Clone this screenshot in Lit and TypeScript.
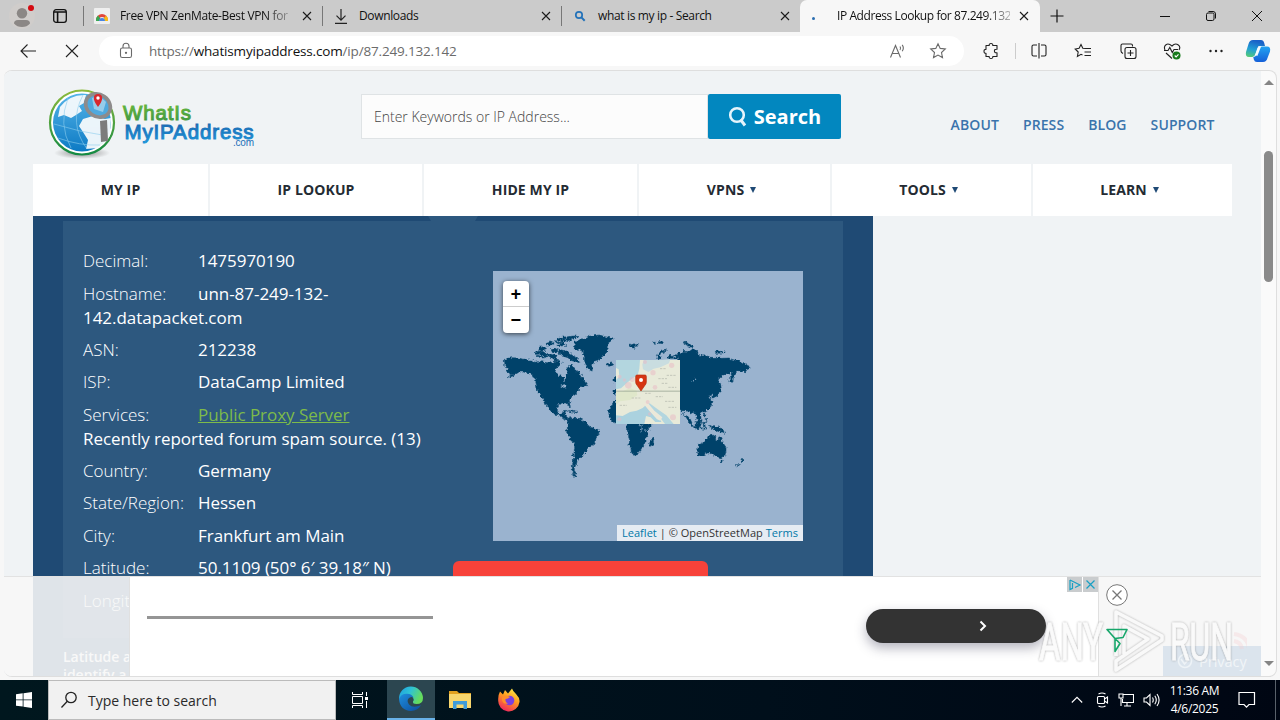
import { LitElement, html, css, svg } from "lit";
import { customElement, property } from "lit/decorators.js";

const closeIcon = html`
  <svg width="10" height="10" viewBox="0 0 10 10" fill="none" stroke="#1b1b1b" stroke-width="1.1">
    <path d="M1 1l8 8M9 1L1 9" />
  </svg>
`;

@customElement("browser-tabs")
export class BrowserTabs extends LitElement {
  render() {
    return html`
      <div class="profile">
        <svg width="30" height="28" viewBox="0 0 30 28">
          <circle cx="15" cy="14" r="13" fill="#d0cdcb" />
          <circle cx="15" cy="11.300" r="5.200" fill="#8b8785" />
          <path d="M7 21.500q0-3.500 4-3.500h8q4 0 4 3.500q-3 3.500-8 3.500t-8-3.500z" fill="#8b8785" />
          <circle cx="24" cy="6" r="3" fill="#d40b12" />
        </svg>
      </div>
      <div class="actions">
        <svg width="16" height="16" viewBox="0 0 16 16" fill="none" stroke="#111" stroke-width="1.3">
          <rect x="1.7" y="1.7" width="12.6" height="12.6" rx="2.4" />
          <path d="M2 4h12M5.600 4v10" stroke-width="1.6" />
        </svg>
      </div>
      <div class="tab">
        <span class="icon">
          <svg width="16" height="16" viewBox="0 0 16 16">
            <rect width="16" height="16" rx="1" fill="#efefef" />
            <path d="M2 12a6 6 0 0 1 12 0h-3a3 3 0 0 0-6 0z" fill="#e2463b" />
            <path d="M2 13a6 6 0 0 1 2-5.400l2.400 3.200L5 13z" fill="#38a853" />
            <path d="M14 13a6 6 0 0 0-2-5.400l-2.400 3.200L11 13z" fill="#f8bb15" />
            <path d="M5 13a3 3 0 0 1 6 0z" fill="#4a86e0" />
          </svg>
        </span>
        <span class="title fade">Free VPN ZenMate-Best VPN for</span>
        <span class="close">${closeIcon}</span>
      </div>
      <div class="tab">
        <span class="icon">
          <svg width="16" height="18" viewBox="0 0 16 18" fill="none" stroke="#222" stroke-width="1.2">
            <path d="M8 2v11M3.500 8.700L8 13.200l4.500-4.500M2 16.400h12" />
          </svg>
        </span>
        <span class="title">Downloads</span>
        <span class="close">${closeIcon}</span>
      </div>
      <div class="tab">
        <span class="icon">
          <svg width="14" height="14" viewBox="0 0 14 14" fill="none" stroke="#2372b9">
            <circle cx="6" cy="6" r="3.200" stroke-width="1.700" />
            <path d="M8.400 8.400l3.300 3.300" stroke-width="2" />
          </svg>
        </span>
        <span class="title">what is my ip - Search</span>
        <span class="close">${closeIcon}</span>
      </div>
      <div class="tab active">
        <span class="icon"><i class="dot"></i></span>
        <span class="title fade">IP Address Lookup for 87.249.132</span>
        <span class="close">${closeIcon}</span>
      </div>
      <div class="plus">
        <svg width="14" height="14" viewBox="0 0 14 14" stroke="#111" stroke-width="1.200">
          <path d="M7 .5v13M.5 7h13" />
        </svg>
      </div>
      <div class="controls">
        <svg width="12" height="12" viewBox="0 0 12 12" stroke="#111"><path d="M1 6.500h10" /></svg>
        <svg width="12" height="12" viewBox="0 0 12 12" fill="none" stroke="#111">
          <rect x="1.500" y="3" width="7.500" height="7.500" rx="1.500" />
          <path d="M3.500 1.500h4.500q2.500 0 2.500 2.500v4.500" />
        </svg>
        <svg width="12" height="12" viewBox="0 0 12 12" stroke="#111">
          <path d="M1 1l10 10M11 1L1 11" />
        </svg>
      </div>
    `;
  }

  static styles = css`
    :host {
      display: flex;
      height: 32px;
      background: #cbcbcb;
      font: 12px "Open Sans", sans-serif;
      color: #111;
    }
    svg {
      display: block;
    }
    .profile {
      width: 46px;
      padding: 2px 0 0 7px;
      box-sizing: border-box;
    }
    .actions {
      width: 37px;
      padding: 8px 0 0 6px;
      box-sizing: border-box;
    }
    .tab {
      display: flex;
      align-items: center;
      width: 239px;
      box-sizing: border-box;
      background: linear-gradient(#777, #777) left 50% / 1px 20px no-repeat;
    }
    .icon {
      display: flex;
      flex: none;
      justify-content: center;
      width: 16px;
      margin: 0 10px 0 11px;
    }
    .title {
      flex: 1;
      white-space: nowrap;
      line-height: 20px;
      letter-spacing: -0.35px;
    }
    .fade {
      mask-image: linear-gradient(90deg, #000 86%, rgba(0, 0, 0, 0.3) 100%);
    }
    .close {
      margin: 0 10px 0 14px;
    }
    .active {
      background: #f7f7f7;
      border-radius: 7px 7px 0 0;
      width: 240px;
    }
    .active .icon {
      margin: 0 16px 0 5px;
    }
    .active .title {
      min-width: 0;
      letter-spacing: -0.42px;
    }
    .active .close {
      margin: 0 11px 0 9px;
    }
    .dot {
      width: 3px;
      height: 3px;
      border-radius: 50%;
      background: #2a6db0;
      margin-top: 4px;
    }
    .plus {
      padding: 9px 0 0 10px;
      width: 101px;
    }
    .controls {
      display: flex;
      align-items: center;
      gap: 34px;
      padding-left: 8px;
    }
  `;
}

@customElement("browser-toolbar")
export class BrowserToolbar extends LitElement {
  render() {
    return html`
      <svg class="back" width="18" height="16" viewBox="0 0 18 16"><path d="M8.500 1.500L2 8l6.500 6.500M2 8h15" /></svg>
      <svg class="stop" width="14" height="14" viewBox="0 0 14 14"><path d="M1 1l12 12M13 1L1 13" /></svg>
      <div class="address">
        <svg width="14" height="18" viewBox="0 0 14 18" class="grey">
          <rect x="1.500" y="6" width="11" height="9.500" rx="1.800" />
          <path d="M4 6V4.200a3 3 0 0 1 6 0V6" />
          <circle cx="7" cy="10.800" r=".6" fill="#666" />
        </svg>
        <span class="url">https://<b>whatismyipaddress.com</b>/ip/87.249.132.142</span>
        <svg width="18" height="16" viewBox="0 0 18 16" class="grey">
          <path d="M1.500 14.500L6.500 2.500l5 12M3.200 10.500h6.600M11 3.500q1.300 1.800 0 3.500M13.200 1.800q2.300 3 0 6.500" />
        </svg>
        <svg width="18" height="18" viewBox="0 0 18 18" class="grey">
          <path d="M9 1.700l2.200 4.700 5.100.6-3.800 3.500 1 5.100L9 13.100l-4.500 2.500 1-5.100L1.700 7l5.100-.6z" />
        </svg>
      </div>
      <div class="tools">
        <svg width="18" height="18" viewBox="0 0 18 18">
          <path
            d="M4 3.500h3.200q-.2-2 1.800-2t1.800 2H15v3.700q-2.600-.2-2.600 1.800t2.600 1.800v3.700h-4.200q.2 2-1.800 2t-1.800-2H4v-3.200q-2 .2-2-2t2-1.800z"
            stroke-linejoin="round"
          />
        </svg>
        <i class="divider"></i>
        <svg width="18" height="18" viewBox="0 0 18 18">
          <path d="M7 3H3.500Q2 3 2 4.500v8Q2 14 3.500 14H7M11 3h3.500Q16 3 16 4.500v8q0 1.500-1.500 1.500H11M9 1v15.500" />
        </svg>
        <svg width="18" height="18" viewBox="0 0 18 18">
          <path d="M11 6.500L8.800 6.200 7 2.500 5.100 6.200 1.200 7l3 3-.8 4.500L7 12.300l1.500.8M11 6.500h6M10.500 10H17M10.500 13.500H17" />
        </svg>
        <svg width="18" height="18" viewBox="0 0 18 18">
          <path d="M13.500 4.500V3.500Q13.500 2 12 2H3.500Q2 2 2 3.500V9q0 1.500 2 2.500" />
          <rect x="6" y="5.500" width="11" height="11" rx="2" />
          <path d="M11.500 8v6M8.500 11h6" />
        </svg>
        <svg width="18" height="18" viewBox="0 0 18 18">
          <path d="M2 8Q.5 4.500 3 2.700T9 4q3-3.200 6-1.300T16 8M1 8.500h4l1.800-3 2.500 5 1.700-3h4M3 11l6 5.500" />
          <circle cx="13.500" cy="13.500" r="4" fill="#177a1b" stroke="none" />
          <path d="M11.700 13.500l1.400 1.400 2.400-2.600" stroke="#fff" />
        </svg>
        <svg width="18" height="18" viewBox="0 0 18 18">
          <g fill="#222" stroke="none">
            <circle cx="3.500" cy="9" r="1.200" /><circle cx="9" cy="9" r="1.200" /><circle cx="14.500" cy="9" r="1.200" />
          </g>
        </svg>
      </div>
      <svg class="copilot" width="26" height="24" viewBox="0 0 26 24">
        <defs>
          <linearGradient id="ca" x1=".3" y1="0" x2="0" y2="1">
            <stop offset="0" stop-color="#1a62c8" /><stop offset=".5" stop-color="#22a0d5" /><stop offset="1" stop-color="#5bd06c" />
          </linearGradient>
          <linearGradient id="cb" x1="0" y1="0" x2="0" y2="1">
            <stop offset="0" stop-color="#22a4f2" /><stop offset="1" stop-color="#1560d8" />
          </linearGradient>
        </defs>
        <path d="M8 1h8q2.500 0 3.200 3l.8 3h-5q-2 0-2.600 2l-2 6q-1 3-3 3H4q-4 0-3-5L3.500 5Q4.500 1 8 1z" fill="url(#ca)" stroke="none" />
        <path d="M18 23h-6q-2.500 0-3.200-2.500L8.300 18q2.500 0 3.400-3l2.300-5.500q.8-2 3-2H22q4 0 3 5L22.500 19q-1 4-4.500 4z" fill="url(#cb)" stroke="none" />
        <path d="M14.800 7.500l-3.600 9" stroke="#f4fbff" stroke-width="2.400" />
      </svg>
    `;
  }

  static styles = css`
    :host {
      display: flex;
      align-items: center;
      height: 38px;
      background: #f7f7f7;
      font: 13.5px "Open Sans", sans-serif;
      color: #6b6b6b;
    }
    svg {
      fill: none;
      stroke: #222;
      stroke-width: 1.1;
      flex: none;
    }
    .grey {
      stroke: #6a6a6a;
    }
    .back {
      margin-left: 19px;
    }
    .stop {
      margin-left: 28px;
    }
    .address {
      display: flex;
      align-items: center;
      box-sizing: border-box;
      width: 865px;
      height: 30px;
      margin-left: 20px;
      padding: 0 17px 0 20px;
      border-radius: 15px;
      background: #fff;
      gap: 22px;
    }
    .url {
      flex: 1;
      margin-left: -6px;
      letter-spacing: -0.17px;
    }
    b {
      font-weight: 400;
      color: #111;
    }
    .tools {
      display: flex;
      align-items: center;
      margin-left: 18px;
      gap: 26.4px;
    }
    .divider {
      width: 1px;
      height: 16px;
      background: #ccc;
      margin: 0 -13px 0 -11px;
    }
    .copilot {
      margin-left: 20px;
    }
  `;
}

@customElement("site-header")
export class SiteHeader extends LitElement {
  render() {
    return html`
      <header>
        <svg class="logo" width="210" height="74" viewBox="0 0 210 74">
          <defs>
            <linearGradient id="ring" x1="0" y1="0" x2="0" y2="1">
              <stop offset="0" stop-color="#8cba3d" /><stop offset="1" stop-color="#148a43" />
            </linearGradient>
            <linearGradient id="sea" x1="0" y1="0" x2="0" y2="1">
              <stop offset="0" stop-color="#54b4e8" /><stop offset="1" stop-color="#0d7ac4" />
            </linearGradient>
            <linearGradient id="green" x1="0" y1="0" x2="0" y2="1">
              <stop offset="0" stop-color="#6dbb3c" /><stop offset="1" stop-color="#3b9440" />
            </linearGradient>
            <linearGradient id="blue" x1="0" y1="0" x2="0" y2="1">
              <stop offset="0" stop-color="#1b62ab" /><stop offset="1" stop-color="#1c94d8" />
            </linearGradient>
            <radialGradient id="shade"><stop stop-color="#8b8b8b" /><stop offset="1" stop-color="#8b8b8b00" /></radialGradient>
          </defs>
          <ellipse cx="34" cy="65" rx="28" ry="6" fill="url(#shade)" />
          <circle cx="34" cy="34.500" r="32" fill="#fff" stroke="url(#ring)" stroke-width="2.200" />
          <circle cx="34" cy="34.500" r="29" fill="url(#sea)" />
          <path d="M12 19Q22 6 38 7l-2 8-5 3 3 5-6 4-5 3-7-3-6 2z" fill="#f5fafc" opacity=".95" />
          <path d="M35 31l10-3 12 3 6-1-1 18-12 12-12 1 2-9-5-8-4-6z" fill="#f5fafc" opacity=".95" />
          <path d="M6 36q25 8 54 12M10 50q22 8 42 7M20 10Q10 36 23 60M35 7Q20 35 39 61" fill="none" stroke="#8ccced" stroke-width=".6" />
          <path d="M52 33l7-1 1 21-7 1z" fill="#7c7c7c" />
          <ellipse cx="50" cy="17.500" rx="13" ry="11" fill="#4fa9de" stroke="#8e8b8b" stroke-width="3.600" transform="rotate(35 50 17.500)" />
          <path d="M44 10q7-4 14 4l-3 10-9-3z" fill="#eef8fb" opacity=".45" />
          <path d="M50 19q-4.500-6-4.200-9.500T50 6t4.200 3.500T50 19z" fill="#d8282d" />
          <circle cx="50" cy="10" r="1.700" fill="#fff" />
          <g font-family="Liberation Sans, sans-serif">
            <text x="75" y="32" font-size="20.500" textLength="68" fill="url(#green)" stroke="url(#green)" stroke-width="1">WhatIs</text>
            <text x="76.500" y="51" font-size="20.500" textLength="129" fill="url(#blue)" stroke="url(#blue)" stroke-width="1">MyIPAddress</text>
            <text x="185" y="57.500" font-size="10" textLength="21" fill="#1d6fb8">.com</text>
          </g>
        </svg>
        <form class="search">
          <span class="field">Enter Keywords or IP Address...</span>
          <span class="button">
            <svg width="20" height="22" viewBox="0 0 20 22" fill="none" stroke="#e6f4fb">
              <circle cx="9" cy="9" r="6.800" stroke-width="2.600" />
              <path d="M12.500 13.500l4.500 6" stroke-width="3" />
            </svg>
            Search
          </span>
        </form>
        <div class="links"><a>ABOUT</a><a>PRESS</a><a>BLOG</a><a>SUPPORT</a></div>
      </header>
      <nav>
        <a>MY IP</a>
        <a>IP LOOKUP</a>
        <a>HIDE MY IP</a>
        <a>VPNS<i></i></a>
        <a>TOOLS<i></i></a>
        <a>LEARN<i></i></a>
      </nav>
    `;
  }

  static styles = css`
    :host {
      display: block;
      font-family: "Open Sans", sans-serif;
    }
    header {
      display: flex;
      height: 93px;
      box-sizing: border-box;
      padding: 17px 47px 0 44px;
    }
    .search {
      display: flex;
      height: 45px;
      margin: 6px 0 0 103px;
    }
    .field {
      box-sizing: border-box;
      width: 347px;
      padding-left: 12px;
      border: 1px solid #dfe3e5;
      background: #fcfcfc;
      color: #444;
      font-size: 14px;
      font-weight: 300;
      line-height: 43px;
    }
    .button {
      display: flex;
      align-items: center;
      justify-content: center;
      gap: 6px;
      width: 133px;
      border-radius: 2px;
      background: #0287bf;
      color: #fff;
      font-size: 20px;
      font-weight: 700;
    }
    .links {
      display: flex;
      gap: 24px;
      margin: 27px -0.5px 0 auto;
      color: #3a73ac;
      font-size: 14px;
      font-weight: 600;
      line-height: 20px;
      letter-spacing: 0.1px;
    }
    nav {
      display: grid;
      grid-template-columns: 175px 212px 213px 191px 199px 199px;
      gap: 2px;
      height: 52px;
      margin-left: 29px;
    }
    nav a {
      display: flex;
      align-items: center;
      justify-content: center;
      padding-bottom: 2px;
      background: #fff;
      color: #242b33;
      font-size: 14px;
      font-weight: 700;
      letter-spacing: 0.12px;
    }
    nav i {
      margin: 2px 6px 0;
      border: 3px solid transparent;
      border-top: 6px solid #1f4a75;
      border-bottom: 0;
    }
  `;
}

@customElement("world-map")
export class WorldMap extends LitElement {
  land = svg`
    <path d="M58 292l22-5 20 1 12 3 28 4 10 6 14-3 14 3 17 2 20-5 17 2-10 12-10 8-2 8 4 6 14 5 8 5 2 14 5-3-1-14 6-10-2-12 10-10 12 8 6 10 8 2 8 14 12 20 6 8-8-1-12 4-7 6 3 2-12 12-12 8-2 8-5 8 3 16-4-1-6-10-14 0-10 4-5 10 0 12 6 8 8-2 4-9 7-1-3 13 8 4 1 10 8 4-5 1-13-6-12-11-16-3-14-8-6-14-8-8-3-10 4 14-3-2-8-22-14-18-4-20-2-15-8-14-14-8-14-2-14 0-18 12-17 5 15-12-10-1-9-8 5-7-8-4z"/>
    <path d="M270 238l28-9 12-6 35-4 14 5 26 4-12 10-3 12-1 14-8 6 2 6-12 8-8 8-12 4-8 10-2 21-8-4-7-8-8-20 2-10-6-6 2-8-14-9-14-2z"/>
    <path d="M212 234l18-8 38-4 14 2-18 8-20 4-12 6-22 0zM184 244l14-4 8 5-10 4-12 0zM162 256l16-2 8 8-12 5-12-3zM148 270l22-3 10 5 12 9-18 7-14-2-8-8zM195 264l14-6 10 6-7 7zM222 262l22 6 18 12 14 8 9 16-14-5-14-4-8-8-18-5-12-8zM190 281l12-5 16 10-14 6zM214 248l18-4 10 6-20 4zM206 289l16 5-14 5z"/>
    <path d="M366 306l14-3 6 5-8 4-10 1zM286 364l12 1 1 7-12-3zM246 446l14 1 10 4-10-1zM270 450l8 1-5 2zM387 350l6-4v14l-6 1zM387 384l6-2v18l-6-4z"/>
    <path d="M248 473l10-6 8 2 14 0 12 6 12 8 7 12 14 3 16 9 1 7-8 10-3 14-6 10-14 7-6 12-10 8-2 9-12 5-5 9-2 12-6 6 0 10 8 10-10-2-4-8 0-16 3-14 1-18 3-18 0-16-12-9-6-14-8-13 4-11z"/>
    <path d="M264 634l9 6-4 5-6-5zM393 410l-10 14-7 15-5 9 2 18 8 11 12 6zM427 484h76l-12 15-4 11 1 14-8 9 0 13-9 10-2 8-12 13-11 3-6-8-3-13-5-10 2-14-3-12 0-16-7-8zM508 527l-3 12-6 15-5-4 1-14z"/>
    <path d="M578 274l20-6 14 1 10-7 12 2 2 10 14 8 14-1 12 5 20 0 14 3 22-1 12 5 18 4 14 8 14 6 6 4-8 4-6 10-12-1-10-3-8 8-7 10-1 12-7 8-5-10 8-12 3-12-9 4-15 2-10 10-12 7 10 14 2 16-6 14-10 7-6-1-3-5-14 5 3 10 8 7-4 15-8 8-12 9-6 0-5 5 2 12-6 11-5-3-3-12-5-13-8 2-6 3-8-10H578z"/>
    <path d="M640 547l15-6 9-12 8-5 4-2 8-3 9 5-2 8 7 6 6-17 5 10 4 10 10 15 0 13-4 13-10 8-10-2-7-10-8 2-10-7-10 0-12 7-12 1-2-10z"/>
    <path d="M706 597l6-1-3 7zM753 613l9-9 4 3-8 6zM768 595l2-6 6 3-5 8zM516 288l4-14 10-7 18-3-16 7-7 10 0 10zM548 286l8-7 6 7 10-5 12 4v4h-36zM596 242l8-2 8 7 10 3 4 7-10-2-10-5zM430 246l10 2 16-4 5 5-10 1-4 5 4 8-6-5-10-3zM691 268l10-1 16 3-1 3-25 1zM503 241l8 0-2 3zM520 239l15 0-2 6-12-2z"/>
    <path d="M602 456l14 16 8 18-3 2-10-14-10-16zM622 492l20 5 22 2-4 3-32-4zM630 484l10-4 6-9 5 3-3 14-7 11-10-6zM654 482l8-2-3 4 2 10-5-1zM654 452l5 5 1 8-3-2zM660 470l7 0 1 7-5 1zM674 490l10 4 15 0 15 9 5 11-10-4-14-2-8-6-10-4zM700 352l3 12-2 16 1 10-4 10-12 7-10 1-2 6 3-10 12-4 8-8zM594 452l3 8-4 1zM658 424l4-9 2 4-3 8zM644 442l4 1-2 4z"/>`;

  render() {
    return html`
      <svg width="310" height="270" viewBox="24 27 930 810">
        <filter id="coast">
          <feTurbulence type="fractalNoise" baseFrequency="0.12" numOctaves="2" seed="4" />
          <feDisplacementMap in="SourceGraphic" scale="14" xChannelSelector="R" yChannelSelector="G" />
        </filter>
        <rect x="24" y="27" width="930" height="810" fill="#9ab3cf" />
        <g filter="url(#coast)">
          <g fill="#00436b" stroke="#00436b" stroke-width="1.500">${this.land}</g>
          <path d="M214 322l12-9 12 7 8 18-6 12-6-6-14-4zM226 372l12-5 10 7-12 3zM618 362l14-14-4 11z" fill="#9ab3cf" />
          <g fill="none" stroke="#9ab3cf" stroke-width="2.500">
            <path d="M150 278l22 3 16 10M170 260l14 14 18 2M206 230l14 10 24-10M224 274l14 10-2 9M464 488l8 10-5 16M484 500l-4 10M272 300l-9 6" />
          </g>
        </g>
        <g>
          <rect x="393" y="294" width="192" height="192" fill="#e8ead9" />
          <path d="M393 294h72l-2 26-5 20-15 9-15 12-20 18-15 3v-28l10-10-2-22-8-4z" fill="#b3d6df" />
          <path d="M476 294h50l30-2-4 12-26 12-20 4-16 10-16-8-2-14z" fill="#c9dde0" />
          <path d="M393 486v-26l20 2 22-12 20-4 18-8 14-12 14 6 18 20 10 28h-18l-14-14-14-4-5 24z" fill="#abd2df" />
          <path d="M478 430l10 0 20 22 20 18 12 16h26l-22-26-26-18-24-18z" fill="#b3d6df" />
          <path d="M474 424l12-4 22 26 24 20-6 10-10-4-22-24z" fill="#ece8d9" />
          <path d="M393 390l20-2 22-10 20 8 2 14-22 14-30 4-12 10z" fill="#dfe7ca" />
          <g fill="#e9b9c4" opacity=".5">
            <circle cx="430" cy="370" r="10" /><circle cx="442" cy="352" r="8" /><circle cx="418" cy="354" r="5" />
            <circle cx="504" cy="332" r="8" /><circle cx="510" cy="376" r="7" /><circle cx="560" cy="310" r="8" />
            <circle cx="404" cy="344" r="6" /><circle cx="488" cy="420" r="6" /><circle cx="480" cy="300" r="6" />
            <circle cx="494" cy="456" r="5" /><circle cx="564" cy="466" r="9" /><circle cx="403" cy="472" r="6" />
          </g>
          <path
            d="M520 350h26M530 364h20M545 340h28M512 404h22M540 418h30M440 408h26M525 320h20M550 436h24M404 430h22M550 376h24M480 394h18"
            stroke="#c3c6ba"
            stroke-width="3"
            stroke-dasharray="7 3"
          />
          <path d="M393 387.500h192" stroke="#9aa694" stroke-width="2.500" />
        </g>
        <path d="M456 339h24q4 0 4 4v18q0 5-5 10l-11 16-11-16q-5-5-5-10v-18q0-4 4-4z" fill="#d63511" stroke="#b52f12" stroke-width="2" />
        <circle cx="468" cy="354" r="6" fill="#fff" />
      </svg>
      <div class="zoom"><span>+</span><span>−</span></div>
      <div class="credit"><a>Leaflet</a> | © OpenStreetMap <a>Terms</a></div>
    `;
  }

  static styles = css`
    :host {
      display: block;
      position: relative;
      width: 310px;
      height: 270px;
    }
    .zoom {
      position: absolute;
      left: 10px;
      top: 10px;
      width: 26px;
      border-radius: 4px;
      background: #fff;
      box-shadow: 0 1px 5px rgba(0, 0, 0, 0.65);
      color: #000;
      font: bold 18px/28px "Liberation Mono", monospace;
      text-align: center;
    }
    .zoom span {
      display: block;
      height: 26px;
    }
    .zoom span:first-child {
      height: 25px;
      border-bottom: 1px solid #ccc;
    }
    .credit {
      position: absolute;
      right: 0;
      bottom: 0;
      padding: 0 5px;
      background: rgba(255, 255, 255, 0.75);
      color: #333;
      font-size: 11px;
      line-height: 16px;
      letter-spacing: 0.03px;
      white-space: nowrap;
    }
    .credit a {
      color: #0078a8;
    }
  `;
}

@customElement("ip-details")
export class IpDetails extends LitElement {
  @property({ type: Array })
  rows = [
    ["Decimal:", "1475970190"],
    ["Hostname:", "unn-87-249-132-142.datapacket.com"],
    ["ASN:", "212238"],
    ["ISP:", "DataCamp Limited"],
    ["Services:", html`<a>Public Proxy Server</a><br />Recently reported forum spam source. (13)`],
    ["Country:", "Germany"],
    ["State/Region:", "Hessen"],
    ["City:", "Frankfurt am Main"],
    ["Latitude:", "50.1109 (50° 6′ 39.18″ N)"],
    ["Longitude:", ""],
  ];

  render() {
    return html`
      <div class="notch"></div>
      <section class="inner">
        <div class="list">
          ${this.rows.map(([label, value]) => html`<p><span>${label}</span>${value}</p>`)}
        </div>
        <div class="side">
          <world-map></world-map>
          <div class="update"></div>
        </div>
      </section>
      <div class="note">Latitude and<br />identify a</div>
    `;
  }

  static styles = css`
    :host {
      display: block;
      width: 840px;
      height: 460px;
      box-sizing: border-box;
      padding: 0 30px;
      overflow: hidden;
      background: #1f4a74;
      color: #fff;
      font-family: "Open Sans", sans-serif;
    }
    .notch {
      width: 50px;
      height: 5px;
      margin-left: 365px;
      background: #2d587f;
      clip-path: polygon(0 0, 100% 0, 94% 100%, 6% 100%);
    }
    .inner {
      display: flex;
      height: 417px;
      box-sizing: border-box;
      padding: 28.3px 0 0 20px;
      background: #2d587f;
    }
    .list {
      width: 370px;
      padding-right: 30px;
      box-sizing: border-box;
      font-size: 17px;
      line-height: 24px;
      letter-spacing: -0.04px;
    }
    p {
      margin: 0 0 8.36px;
    }
    p span {
      display: inline-block;
      width: 115px;
      font-weight: 300;
      letter-spacing: 0;
    }
    p a {
      color: #7dbb4a;
      text-decoration: underline;
    }
    world-map {
      margin: 21.7px 0 20px 40px;
    }
    .update {
      width: 255px;
      height: 40px;
      border-radius: 6px;
      background: #f7423a;
    }
    .note {
      padding-top: 10px;
      font-size: 14px;
      font-weight: 600;
      line-height: 18px;
    }
  `;
}

@customElement("ad-banner")
export class AdBanner extends LitElement {
  render() {
    return html`
      <div class="ad">
        <div class="rule"></div>
        <div class="cta">
          <svg width="8" height="12" viewBox="0 0 8 12" fill="none" stroke="#fff" stroke-width="2">
            <path d="M1.500 1.500L6 6l-4.500 4.500" />
          </svg>
        </div>
        <svg width="32" height="16" viewBox="0 0 32 16" fill="none" stroke="#19a0c4" stroke-width="1.200">
          <path d="M1 0h15v15H1zM17 0h15v15H17z" fill="#c9ccce" stroke="none" />
          <path d="M4 3v9.500l2.500-1.200V6M4 3l10 5-5 2.500M20.500 3.500l8 8M28.500 3.500l-8 8" />
        </svg>
      </div>
      <div class="rest">
        <svg width="22" height="70" viewBox="0 0 22 70" fill="none">
          <circle cx="11" cy="11" r="10.300" fill="#fff" stroke="#777" />
          <path d="M6.500 6.500l9 9M15.500 6.500l-9 9" stroke="#777" stroke-width="1.300" />
        </svg>
      </div>
      <div class="privacy">
        <svg width="16" height="16" viewBox="0 0 16 16" fill="none" stroke="#eef3f7" stroke-width="1.500">
          <circle cx="8" cy="8" r="6.500" /><path d="M4 6l3.500 5L12 6" />
        </svg>
        Privacy
      </div>
    `;
  }

  static styles = css`
    :host {
      display: flex;
      box-sizing: border-box;
      height: 100px;
      padding-left: 125px;
      border-top: 1px solid #e2e2e2;
      background: rgba(247, 247, 247, 0.89);
    }
    .ad {
      display: flex;
      flex: none;
      width: 970px;
      box-sizing: border-box;
      border: solid #e0e0e0;
      border-width: 0 1px;
      background: #fff;
    }
    .rule {
      width: 286px;
      height: 3px;
      margin: 39px 0 0 17px;
      background: #959595;
    }
    .cta {
      display: flex;
      align-items: center;
      justify-content: flex-end;
      box-sizing: border-box;
      width: 180px;
      height: 34px;
      margin: 32px 20px 0 433px;
      padding-right: 59px;
      border-radius: 17px;
      background: #333;
      box-shadow: 0 5px 12px rgba(40, 40, 70, 0.35);
    }
    .rest {
      width: 64px;
      padding: 7px 0 0 7px;
      box-sizing: border-box;
    }
    .privacy {
      display: flex;
      align-items: center;
      gap: 6px;
      width: 98px;
      height: 30px;
      margin-top: 69px;
      padding-left: 14px;
      box-sizing: border-box;
      background: #dbe4ed;
      color: #f1f5f8;
      font: 500 14.5px "Open Sans", sans-serif;
    }
  `;
}

@customElement("task-bar")
export class TaskBar extends LitElement {
  render() {
    return html`
      <svg class="start" width="16" height="16" viewBox="0 0 16 16" fill="#fff">
        <path d="M0 2.300L6.700 1.300v6.200H0zM7.500 1.200L16 0v7.500H7.500zM0 8.300h6.700v6.300L0 13.700zM7.500 8.300H16V16l-8.500-1.300z" />
      </svg>
      <div class="search">
        <svg width="16" height="18" viewBox="0 0 16 18" fill="none" stroke="#222" stroke-width="1.300">
          <circle cx="10" cy="6.500" r="5.200" /><path d="M6.300 10.300L.5 16.500" />
        </svg>
        Type here to search
      </div>
      <svg class="view" width="16" height="16" viewBox="0 0 16 16" fill="none" stroke="#fff">
        <path d="M.5 0v2.500h10V0M.5 16v-2.500h10V16M.5 4.500h10v7H.5zM14.500 0v4M14.500 9v7" /><path d="M13 5h3v3h-3z" fill="#fff" stroke="none" />
      </svg>
      <div class="edge">
        <svg width="26" height="26" viewBox="0 0 26 26">
          <defs>
            <linearGradient id="ea" x1="0" y1="0" x2="1" y2=".4">
              <stop offset="0" stop-color="#1d9de2" /><stop offset=".5" stop-color="#2fc3d4" /><stop offset="1" stop-color="#66dc5c" />
            </linearGradient>
            <linearGradient id="eb" x1="0" y1="0" x2="1" y2="1">
              <stop offset="0" stop-color="#1f8fde" /><stop offset="1" stop-color="#0c4c9d" />
            </linearGradient>
          </defs>
          <path d="M1 13A12 12 0 0 1 25 12q0 6-6.500 6-4 0-3.500-2.500 1.500-1.500 0-4Q13 9 9 10q-5 1.500-8 3z" fill="url(#ea)" />
          <path d="M1 13q2-5.500 8-5.300 5 .3 6.500 3.800-3-1.500-5 1t.500 6q3.500 4 12 .8-3.500 5.700-10 5.700Q2 24.500 1 13z" fill="url(#eb)" />
        </svg>
      </div>
      <svg class="folder" width="22" height="20" viewBox="0 0 22 20">
        <path d="M0 1h8l2 2h12v5H0z" fill="#e2a11f" />
        <path d="M0 4h22v14H0z" fill="#f8d66d" />
        <path d="M4 19v-8h14v8h-3.500v-4.500h-7V19z" fill="#3e9bd9" />
      </svg>
      <svg class="fox" width="24" height="24" viewBox="0 0 24 24">
        <defs>
          <linearGradient id="fa" x1=".8" y1="0" x2=".3" y2="1">
            <stop offset="0" stop-color="#fff04a" /><stop offset=".45" stop-color="#ff9a1f" /><stop offset="1" stop-color="#f0245f" />
          </linearGradient>
        </defs>
        <path d="M3 3.500l3 3 2-4.500 3 3.500 4-5q1 3 4 5.500 4 4 3.500 8A10.700 10.700 0 0 1 1.200 12Q1 7 3 3.500z" fill="url(#fa)" />
        <circle cx="12.500" cy="12.500" r="4.800" fill="#7a3fe0" />
        <path d="M6 8q4-1 7 1-2 2-4.500 2-.5 3 2.500 4.500-4 1-5.500-2T6 8z" fill="#ff8f2a" />
      </svg>
      <div class="tray">
        <svg width="12" height="8" viewBox="0 0 12 8"><path d="M.8 6.500L6 1.300l5.200 5.200" /></svg>
        <svg width="14" height="16" viewBox="0 0 14 16">
          <rect x="2.500" y="4.500" width="7" height="7" rx="1" /><path d="M9.500 7l3-2v6l-3-2M3.500 2q3.500-2 7 0M3.500 14q3.500 2 7 0" />
        </svg>
        <svg width="16" height="14" viewBox="0 0 16 14">
          <path d="M5 1.500h10.500v8H4.500V6M9 9.500v3M6 13h7M1 1h4v4H1zM3 5v8" />
        </svg>
        <svg width="17" height="14" viewBox="0 0 17 14">
          <path d="M1 5v4h2.500L7 12.500v-11L3.500 5zM9.500 4.500q1.500 2.500 0 5M11.800 2.800q3 4.200 0 8.400M14 1q4.200 6 0 12" />
        </svg>
      </div>
      <div class="clock"><span>11:36 AM</span><span>4/6/2025</span></div>
      <svg class="notice" width="18" height="18" viewBox="0 0 18 18" fill="none" stroke="#fff" stroke-width="1.200">
        <path d="M1 1.500h15.500v12H11L8.500 16.200 6 13.500H1z" />
      </svg>
      <i class="edge-line"></i>
    `;
  }

  static styles = css`
    :host {
      display: flex;
      align-items: center;
      height: 40px;
      background: linear-gradient(90deg, #00171e, #000f1b 60%, #000613);
      color: #fff;
      font: 12px "Open Sans", sans-serif;
    }
    svg {
      flex: none;
    }
    .start {
      margin: 0 16px;
    }
    .search {
      display: flex;
      align-items: center;
      gap: 11px;
      box-sizing: border-box;
      width: 288px;
      height: 40px;
      padding-left: 12px;
      border: 1px solid #bbb;
      background: #f1f1f1;
      color: #2a2a2a;
      font-size: 14px;
    }
    .view {
      margin: 0 19px 0 16px;
    }
    .edge {
      display: flex;
      align-items: center;
      justify-content: center;
      box-sizing: border-box;
      width: 48px;
      height: 40px;
      border-bottom: 2px solid #69b2e8;
      background: #2c4650;
    }
    .folder {
      margin: 0 26px 0 14px;
    }
    .tray {
      display: flex;
      align-items: center;
      gap: 9px;
      margin-left: auto;
    }
    .tray svg {
      fill: none;
      stroke: #fff;
      stroke-width: 1.1;
    }
    .tray svg:first-child {
      margin-right: 3px;
    }
    .clock {
      display: flex;
      flex-direction: column;
      align-items: center;
      width: 69px;
      line-height: 18px;
      letter-spacing: -0.3px;
    }
    .notice {
      margin: 0 19px 0 9px;
    }
    .edge-line {
      width: 1px;
      height: 40px;
      margin-right: 4px;
      background: #59616a;
    }
  `;
}

@customElement("app-root")
export class AppRoot extends LitElement {
  render() {
    return html`
      <browser-tabs></browser-tabs>
      <browser-toolbar></browser-toolbar>
      <div class="window">
        <main>
          <site-header></site-header>
          <ip-details></ip-details>
          <ad-banner></ad-banner>
        </main>
        <aside>
          <i class="up"></i>
          <i class="thumb"></i>
          <i class="down"></i>
        </aside>
      </div>
      <task-bar></task-bar>
      <svg class="mark" width="220" height="72" viewBox="0 0 220 72">
        <defs>
          <filter id="glow" x="-10%" y="-10%" width="120%" height="120%">
            <feDropShadow dx="0" dy="0" stdDeviation="1.300" flood-color="#777" flood-opacity=".7" />
          </filter>
        </defs>
        <path d="M207 30q14 2 15 15M207 37q7 1 8 8" fill="none" stroke="#f3cfd2" stroke-width="4" opacity=".35" />
        <g filter="url(#glow)" opacity=".9">
          <g font-family="Roboto, sans-serif" font-size="51" fill="#fbfbfb" stroke="#fbfbfb" stroke-width=".8">
            <text x="12" y="56" textLength="64" lengthAdjust="spacingAndGlyphs">ANY</text>
            <text x="143" y="56" textLength="63" lengthAdjust="spacingAndGlyphs">RUN</text>
          </g>
          <path d="M89 52V8l46 24v4L89 66v-9l32-22-24-13v28" fill="none" stroke="#fafafa" stroke-width="3.500" stroke-linejoin="round" />
        </g>
        <g fill="none" stroke="#16a66a" stroke-width="1.600" stroke-linejoin="round">
          <path d="M80 25.500h20l-4 8-8 1zM88 34.500v13l5-8-5-5z" />
        </g>
      </svg>
    `;
  }

  static styles = css`
    :host {
      display: block;
      position: relative;
      width: 1280px;
      height: 720px;
      overflow: hidden;
      background: #f7f7f7;
    }
    .window {
      display: flex;
      box-sizing: border-box;
      width: 1273px;
      height: 607px;
      margin: 0 0 3px 4px;
      border: 1px solid #dedede;
      border-left: 0;
      border-radius: 8px;
      overflow: hidden;
      background: #fafafa;
    }
    main {
      flex: none;
      width: 1257px;
      position: relative;
      background: #f0f3f5;
    }
    ip-details {
      margin-left: 29px;
    }
    ad-banner {
      position: absolute;
      left: 0;
      right: 0;
      bottom: 0;
    }
    aside {
      display: flex;
      flex-direction: column;
      align-items: center;
      width: 15px;
    }
    .up,
    .down {
      border: 5px solid transparent;
      border-bottom-color: #858585;
      border-top: 0;
      margin-top: 9px;
    }
    .thumb {
      width: 9px;
      height: 131px;
      margin-top: 66px;
      border-radius: 5px;
      background: #8a8a8a;
    }
    .down {
      margin: auto 0 10px;
      border-top: 5px solid #858585;
      border-bottom: 0;
    }
    .mark {
      position: absolute;
      left: 1027px;
      top: 604px;
    }
  `;
}
